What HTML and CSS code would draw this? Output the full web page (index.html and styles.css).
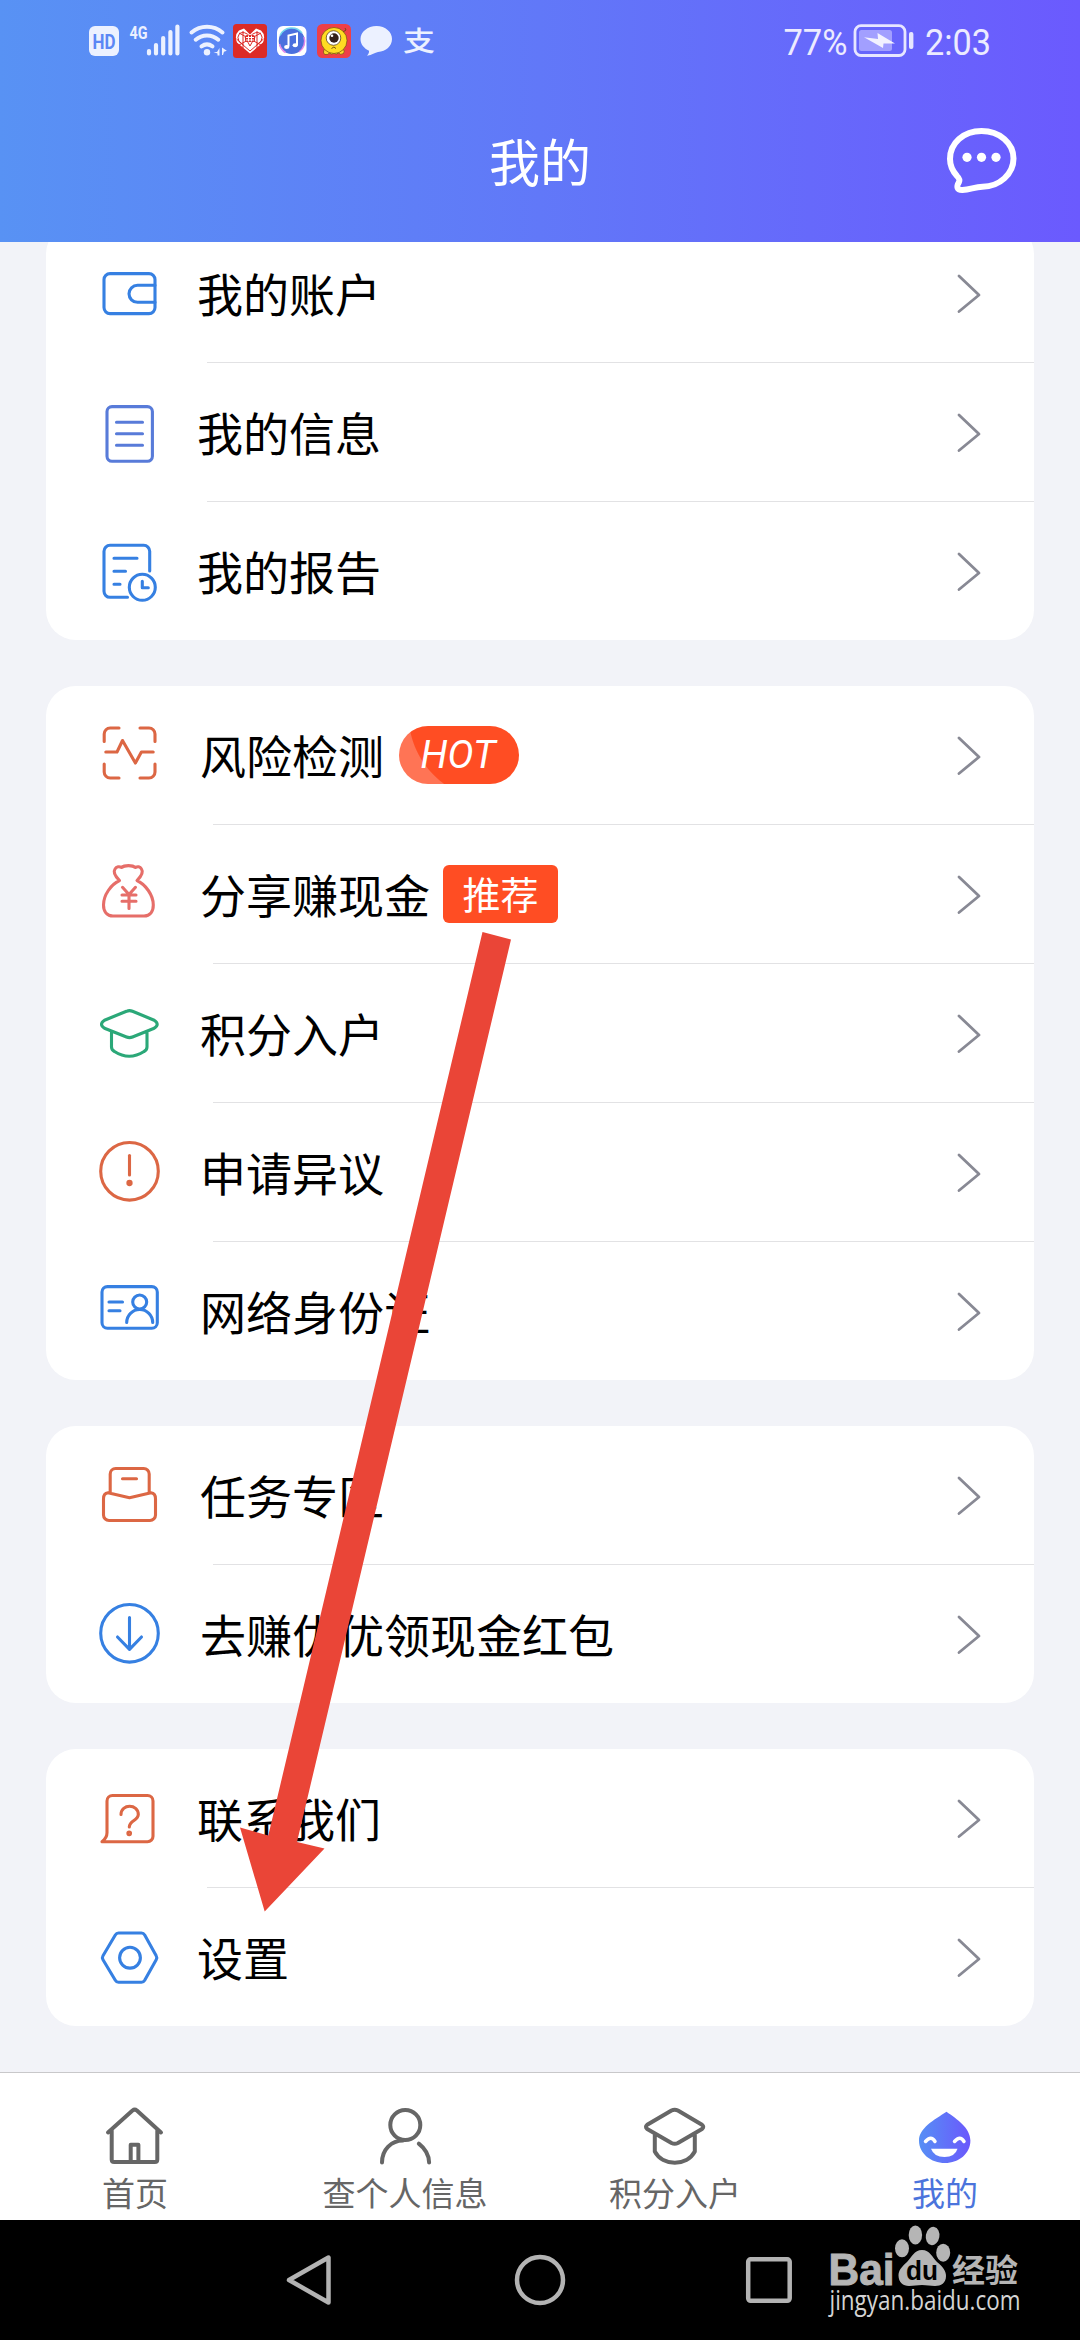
FILE: index.html
```html
<!DOCTYPE html>
<html lang="zh-CN">
<head>
<meta charset="utf-8">
<title>我的</title>
<link rel="stylesheet" href="styles.css">
</head>
<body>
<svg class="defs" aria-hidden="true">
  <symbol id="chevron" viewBox="0 0 24 40"><path d="M2 2 22 21 2 37.500" fill="none" stroke="currentColor" stroke-width="2.800" stroke-linecap="round" stroke-linejoin="round"/></symbol>
</svg>
<div class="screen">
  <header class="header">
    <div class="status">
      <svg class="status-icons" viewBox="80 18 370 46">
        <rect x="89" y="26" width="30" height="30" rx="6" fill="#ecf1ff"/>
        <text x="92.500" y="48.500" class="st-hd" textLength="23" lengthAdjust="spacingAndGlyphs">HD</text>
        <text x="129.500" y="38.700" class="st-4g" textLength="18" lengthAdjust="spacingAndGlyphs">4G</text>
        <path d="M149 51v2.500M156 45v8.500M163.200 38v15.500M170.400 32v21.500M177.400 26.500v27" class="st-line" stroke-width="4.200"/>
        <path d="M191.500 32.500a24 24 0 0 1 31 0M195.700 39.700a17 17 0 0 1 22.600 0M201.500 46.300a9.500 9.500 0 0 1 11 0" class="st-line" stroke-width="4"/>
        <circle cx="207" cy="52.300" r="3.200" fill="#ecf1ff"/>
        <path d="M213.500 52h3.500l2.500-4v7.500h-2v-2zM222 47.500l4.800 3.200-2.800 1-1 3.300h-1z" fill="#ecf1ff"/>
        <rect x="233" y="24" width="34" height="34" rx="3.500" fill="#dc2b26"/>
        <path d="M250 53.500 237 42.500Q234 35 239 30.500l5-2 6 6 6-6 5 2q5 4.500 2 12z" fill="#fff"/>
        <path d="M250 51 239 41.500Q236.500 37 239.500 33.500q5-3 10.500 3 5.500-6 10.500-3 3 3.500.5 8zM239 33l22 12M261 33l-22 12M236.500 39l7 6M263.500 39l-7 6M243 31v17M257 31v17M245 37l5 9 5-9" fill="none" stroke="#dc2b26" stroke-width="1"/>
        <rect x="245" y="35" width="10" height="7" rx="2" fill="#dc2b26"/><path d="M246 37.500h8M246 40h8M248.500 35.500v6M251.500 35.500v6" stroke="#fff" stroke-width="1"/>
        <rect x="277" y="26" width="29.500" height="30" rx="6" fill="#fff"/>
        <circle cx="291.700" cy="41" r="13" fill="#4b70de"/><path d="M280 35.500A13 13 0 0 1 302 33" stroke="#72d6ee" fill="none" stroke-width="1.500"/><path d="M279.500 44a13 13 0 0 0 6 8.500M304 37a13 13 0 0 1-5 15" stroke="#e28bea" fill="none" stroke-width="1.500"/>
        <path d="M288.500 46.500V35.500l8.500-2V45" fill="none" stroke="#fff" stroke-width="2"/><ellipse cx="286.700" cy="47" rx="2.600" ry="2" fill="#fff"/><ellipse cx="295.200" cy="45.300" rx="2.600" ry="2" fill="#fff"/>
        <rect x="317" y="24" width="34" height="34" rx="5.500" fill="#ee3f48"/>
        <path d="M325 48q-3 5 0 6.500 3 .5 4.500-1.500 2 2.500 4.500 0 2 2.500 4.500 0 2 2.500 5 .5 2-2-1-5.500z" fill="#ffd62c" stroke="#6f4a10" stroke-width=".7"/>
        <circle cx="334" cy="40.500" r="13" fill="#ffdc22" stroke="#6f4a10" stroke-width=".7"/>
        <circle cx="333.500" cy="38" r="7.300" fill="#fff" stroke="#5a4020" stroke-width=".8"/><circle cx="334" cy="38" r="4.700" fill="#33201a"/><circle cx="332" cy="35.800" r="1.300" fill="#fff"/>
        <path d="M331.500 48.500q2.500-3 4.500 0M343 32l3-2-1-2" fill="none" stroke="#754c12" stroke-width="1"/>
        <path d="M376.500 26c9 0 15.500 6 15.500 13s-6 12.500-14 13c-3 .5-6 3-11 3.800 1.500-1.500 2.300-3.600 2-5-5-2.500-8.500-6.500-8.500-11.800 0-7 7-13 16-13z" fill="#ecf1ff"/>
        <text x="403" y="51" class="st-pay" textLength="32" lengthAdjust="spacingAndGlyphs">支</text>
      </svg>
      <svg class="status-right" viewBox="780 18 220 46">
        <text x="783.500" y="54.500" class="st-num" textLength="64" lengthAdjust="spacingAndGlyphs">77%</text>
        <rect x="855" y="25.700" width="50" height="29.800" rx="6" fill="none" stroke="#e7e6ff" stroke-width="2.800"/>
        <rect x="859" y="30" width="33" height="21" rx="2.500" fill="#a29fff"/>
        <path d="M864 37.300 878 39 877.500 33 895 43.500 883.500 43.500 883 48z" fill="#f3f2ff"/>
        <rect x="909" y="32" width="4.400" height="17" rx="2" fill="#e7e6ff"/>
        <text x="925" y="54.500" class="st-num" textLength="66" lengthAdjust="spacingAndGlyphs">2:03</text>
      </svg>
    </div>
    <div class="titlebar">
      <h1 class="title">我的</h1>
      <svg class="chat" viewBox="942 124 80 74"><path d="M981.500 132c18 0 32 12 32 27.500s-14 28-31 28.300c-8 .2-12 2.800-20 3.200-5.500.2-6.500-3-3.500-8 1.200-2.500 0-4-2-6-4.500-5-7-10.500-7-17 0-16 13.500-28 31.500-28z" fill="none" stroke="#fff" stroke-width="6"/><g fill="#fff"><circle cx="967" cy="158.300" r="4.600"/><circle cx="981.500" cy="158.300" r="4.600"/><circle cx="996" cy="158.300" r="4.600"/></g></svg>
    </div>
  </header>

  <main class="content">
    <section class="card card-narrow">
      <div class="row">
        <svg class="icon blue" viewBox="0 0 64 64"><rect x="7" y="12.600" width="51" height="40" rx="6"/><path d="M58 24.300H40.500a8.500 8.500 0 0 0 0 17H58"/></svg>
        <span class="label">我的账户</span><svg class="chev"><use href="#chevron"/></svg>
      </div>
      <div class="row">
        <svg class="icon indigo" viewBox="0 0 64 64"><rect x="10" y="6.600" width="45.400" height="54.700" rx="5"/><path d="M19.500 22.300h26M19.500 33.700h26M19.500 45.300h26"/></svg>
        <span class="label">我的信息</span><svg class="chev"><use href="#chevron"/></svg>
      </div>
      <div class="row">
        <svg class="icon blue" viewBox="0 0 64 64"><path d="M52.700 32V12.300a6 6 0 0 0-6-6H13a6 6 0 0 0-6 6v40a6 6 0 0 0 6 6h17.500M17 19.300h23M17 32.300h11.500M17 45.300h6"/><circle cx="45.300" cy="48.300" r="13"/><path d="M45.300 42.200v6.500h6"/></svg>
        <span class="label">我的报告</span><svg class="chev"><use href="#chevron"/></svg>
      </div>
    </section>

    <section class="card">
      <div class="row">
        <svg class="icon orange" viewBox="0 0 64 64"><path d="M7.200 18.500V11a6 6 0 0 1 6-6H22M43 5h9a6 6 0 0 1 6 6v7.500M58 41v8a6 6 0 0 1-6 6h-9M22 55h-8.800a6 6 0 0 1-6-6v-8M8.800 29H20l5.500-11.500L38.400 40l6-11h11.800"/></svg>
        <span class="label">风险检测</span><span class="badge hot"><i>HOT</i></span><svg class="chev"><use href="#chevron"/></svg>
      </div>
      <div class="row">
        <svg class="icon coral" viewBox="0 0 64 64"><path d="M22.500 18.500c-4-4-6.500-8.500-4.500-11.500 1.500-2.500 4.500-2.800 6.500-1.500 3-2.500 11-2.500 14 0 2-1.300 4.500-1 6 1.500 2 3-.5 7.500-4.500 11.500 8.500 4 16.300 14.500 16.300 24.500 0 6.500-3.300 11-9.300 11H16C10 54 6.500 49.500 6.500 43c0-10 7.500-20.500 16-24.500zM25.500 25.300l6.500 7.200 6.500-7.200M25 33h14M25 39.300h14M32 33v13.500"/></svg>
        <span class="label">分享赚现金</span><span class="badge rec">推荐</span><svg class="chev"><use href="#chevron"/></svg>
      </div>
      <div class="row">
        <svg class="icon green" viewBox="0 0 64 64"><path d="M29.500 10.300 7.500 19.200q-6 4 0 8l22 8.800q3 1.200 6 0l21.700-8.800q6-4 0-8L35.500 10.300q-3-1.300-6 0zM14.500 30.500V46q0 3 3 4.500 14.700 9.500 29.500 0 3-1.500 3-4.500V30.500"/></svg>
        <span class="label">积分入户</span><svg class="chev"><use href="#chevron"/></svg>
      </div>
      <div class="row">
        <svg class="icon orange" viewBox="0 0 64 64"><circle cx="32.500" cy="31.300" r="28.800"/><path d="M32.500 15.500V35"/><circle cx="32.500" cy="43" r="1.600"/></svg>
        <span class="label">申请异议</span><svg class="chev"><use href="#chevron"/></svg>
      </div>
      <div class="row">
        <svg class="icon blue" viewBox="0 0 64 64"><rect x="5" y="7.600" width="55.300" height="41.700" rx="5.500"/><path d="M12 23h13.500M12 31.700h11M29.700 43.500a13 13 0 0 1 26 0"/><circle cx="42.700" cy="23" r="7"/></svg>
        <span class="label">网络身份证</span><svg class="chev"><use href="#chevron"/></svg>
      </div>
    </section>

    <section class="card">
      <div class="row">
        <svg class="icon orange" viewBox="0 0 64 64"><path d="M13.200 29V11a5.500 5.500 0 0 1 5.500-5.500h28A5.500 5.500 0 0 1 52.200 11v18M25.500 15.700h14M11 29.800q-4.500.5-4.500 6V52a5.500 5.500 0 0 0 5.500 5.500h41a5.500 5.500 0 0 0 5.500-5.500V35.800q0-5.500-4.500-6l-21.500 4.900z"/></svg>
        <span class="label">任务专区</span><svg class="chev"><use href="#chevron"/></svg>
      </div>
      <div class="row">
        <svg class="icon blue" viewBox="0 0 64 64"><circle cx="32.500" cy="31.300" r="28.800"/><path d="M32.500 15.500V47M20.500 35l12 12.300 12-12.300"/></svg>
        <span class="label">去赚优优领现金红包</span><svg class="chev"><use href="#chevron"/></svg>
      </div>
    </section>

    <section class="card card-narrow">
      <div class="row">
        <svg class="icon orange" viewBox="0 0 64 64"><path d="M5 55.700q5-4 5-9V15a5.500 5.500 0 0 1 5.500-5.500h35A5.500 5.500 0 0 1 56 15v35.200a5.500 5.500 0 0 1-5.500 5.500zM24 28.500c0-11 17.300-11 17.300 0 0 6-9 6-9 12.500"/><circle cx="32.200" cy="47.300" r="1.300"/></svg>
        <span class="label">联系我们</span><svg class="chev"><use href="#chevron"/></svg>
      </div>
      <div class="row">
        <svg class="icon blue" viewBox="0 0 64 64"><path d="M21.500 8h23q2 0 3.200 2l11.500 20.700q1.200 2 0 4L47.700 55.300q-1.200 2-3.200 2h-23q-2 0-3.200-2L6 34.700q-1.200-2 0-4L18.300 10q1.200-2 3.200-2z"/><circle cx="33" cy="32.700" r="10.400"/></svg>
        <span class="label">设置</span><svg class="chev"><use href="#chevron"/></svg>
      </div>
    </section>
  </main>

  <nav class="tabs">
    <div class="tab">
      <svg class="tab-icon" viewBox="0 0 64 64"><path d="M5 28.500 29.500 6.500q2.200-1.700 4.400 0L58 28.500M8.700 26v29.500q0 2.500 2.500 2.500h40.600q2.500 0 2.500-2.500V26M27.700 57.500V40.800h7.700v16.700"/></svg>
      <span>首页</span>
    </div>
    <div class="tab">
      <svg class="tab-icon" viewBox="0 0 64 64"><circle cx="32.300" cy="21" r="15"/><path d="M9 58.500c0-13 9.500-22 21-22M45.800 39.700q10 7.800 10.300 18.800"/></svg>
      <span>查个人信息</span>
    </div>
    <div class="tab">
      <svg class="tab-icon" viewBox="0 0 64 64"><path d="M28.500 6.500 4.200 20.800q-2.500 2 0 4.200l24.300 14q3.200 1.600 6.400 0L59 25q2.500-2.200 0-4.200L34.900 6.500q-3.200-1.600-6.400 0zM11.800 31v16.500c8 15 32 15 40 0V31"/></svg>
      <span>积分入户</span>
    </div>
    <div class="tab active">
      <svg class="tab-icon" viewBox="0 0 64 64"><defs><linearGradient id="drop" x1="0" x2="1"><stop offset="0" stop-color="#568ff5"/><stop offset="1" stop-color="#6b58fc"/></linearGradient></defs><path d="M33.500 7.700C44 15 57.400 24 57.400 36.500 57.400 49.500 46 59 32 59S6 49.500 6 36.500C6 24 21 16 33.500 7.700z" fill="url(#drop)" stroke="none"/><path d="M12.500 37.500q5.500-6.500 9.500 0M41.500 37.500q5.500-6.500 9.500 0" stroke="#fff" stroke-width="3.500"/><path d="M18 44.700h26.500q-2.500 8.300-13 8.300T18 44.700z" fill="#fff" stroke="none"/></svg>
      <span>我的</span>
    </div>
  </nav>

  <div class="sysnav">
    <svg class="sys" viewBox="0 0 56 56"><path d="M45.500 5.500v45L6 28z"/></svg>
    <svg class="sys" viewBox="0 0 56 56"><circle cx="28" cy="28" r="23"/></svg>
    <svg class="sys" viewBox="0 0 56 56"><rect x="7.200" y="7.300" width="41.500" height="41.500" rx="2.500"/></svg>
  </div>

  <svg class="pointer" viewBox="236 928 92 988" width="92" height="988" overflow="visible"><path d="M482.500 932 511 939.500 297 1842l27.500 6.500-59.800 63L240 1827.500l28.300 8z" fill="#ea4537"/></svg>

  <svg class="watermark" viewBox="820 2220 210 110">
    <g fill="#b5b5b5">
      <text x="828.500" y="2284.500" class="wm-bai" textLength="66" lengthAdjust="spacingAndGlyphs">Bai</text>
      <ellipse cx="902" cy="2248.300" rx="7" ry="9"/><ellipse cx="915.400" cy="2235" rx="6.700" ry="9.500"/><ellipse cx="932.600" cy="2236" rx="6.800" ry="9.200" transform="rotate(10 932.600 2236)"/><ellipse cx="943.200" cy="2252.700" rx="7" ry="9"/>
      <path d="M922 2250c8 0 10 7 15 12 6 5 9 9 9 14 0 7-5 10-11 10-5 0-8-1-13-1s-8 1-13 1c-6 0-10.500-4-10.500-10.500 0-5 3-8.500 8.500-13.500 5-5 7-12 15-12z"/>
      <text x="952" y="2281.500" class="wm-cn" textLength="66" lengthAdjust="spacingAndGlyphs">经验</text>
      <text x="829.500" y="2310" class="wm-url" textLength="191" lengthAdjust="spacingAndGlyphs">jingyan.baidu.com</text>
    </g>
    <text x="906" y="2279.500" class="wm-du" textLength="32" lengthAdjust="spacingAndGlyphs">du</text>
  </svg>
</div>
</body>
</html>
```
FILE: styles.css
```css
* { box-sizing: border-box; }
body { margin: 0; font-family: "Noto Sans CJK SC", sans-serif; }
.defs { position: absolute; width: 0; height: 0; }
.screen {
  position: relative;
  width: 1080px;
  height: 2340px;
  display: flex;
  flex-direction: column;
  overflow: hidden;
  background: #f2f3f8;
}

.header {
  flex: none;
  height: 242px;
  background: linear-gradient(90deg, #5892f4, #6178f8 50%, #6b5afe);
  color: #fff;
  z-index: 1;
}
.status {
  display: flex;
  justify-content: space-between;
  padding: 18px 80px 0;
  height: 80px;
}
.status-icons { width: 370px; height: 46px; overflow: visible; }
.status-right { width: 220px; height: 46px; overflow: visible; }
.st-hd { font: 700 20px Roboto, sans-serif; fill: #5b87f5; }
.st-4g { font: 700 19px Roboto, sans-serif; fill: #ecf1ff; }
.st-line { fill: none; stroke: #ecf1ff; stroke-linecap: round; }
.st-pay { font: 500 27px "Noto Sans CJK SC", sans-serif; fill: #ecf1ff; }
.st-num { font: 400 36px Roboto, sans-serif; fill: #ecebff; }
.titlebar {
  display: grid;
  grid-template-columns: 1fr auto 1fr;
  align-items: center;
  height: 160px;
  padding-right: 58px;
  padding-left: 58px;
}
.title { grid-column: 2; margin: 0; font-size: 51px; font-weight: 400; line-height: 160px; }
.chat { justify-self: end; width: 80px; height: 74px; }

.content {
  flex: 1;
  min-height: 0;
  margin-top: -18px;
  padding: 0 46px;
  display: flex;
  flex-direction: column;
  gap: 46px;
}
.card { --inset: 167px; --gap: 39px; background: #fff; border-radius: 30px; overflow: hidden; }
.card-narrow { --inset: 161px; --gap: 36px; }
.row {
  display: flex;
  align-items: center;
  height: 139px;
  padding: 0 53px 1px 51px;
  background: linear-gradient(#e2e2e4, #e2e2e4) var(--inset) 100% / 100% 1px no-repeat;
}
.row:last-child { height: 138px; padding-bottom: 0; background: none; }
.icon {
  flex: none;
  width: 64px;
  height: 64px;
  margin-right: var(--gap);
  fill: none;
  stroke: currentColor;
  stroke-width: 3.100;
  stroke-linecap: round;
  stroke-linejoin: round;
}
.blue { color: #3680e2; }
.indigo { color: #587bd9; }
.orange { color: #dc6744; }
.coral { color: #e66e69; }
.green { color: #2ba878; }
.label { padding-bottom: 3px; font-size: 46px; line-height: 66px; color: #000; white-space: nowrap; }
.chev { flex: none; width: 24px; height: 40px; margin-left: auto; margin-top: 1px; color: #888994; }
.badge {
  display: flex;
  align-items: center;
  justify-content: center;
  height: 58px;
  color: #fff;
  background: #ff4d23;
}
.hot {
  width: 120px;
  margin-left: 15px;
  padding-right: 2px;
  border-radius: 29px;
  font: 400 39px Roboto, sans-serif;
  background: radial-gradient(circle at 96px -12px, #ff4d23 86px, #ff7455 87px);
}
.rec { width: 115px; margin-left: 13px; padding-bottom: 3px; border-radius: 6px; font-size: 38px; line-height: 55px; }

.tabs {
  flex: none;
  display: grid;
  grid-template-columns: repeat(4, 1fr);
  height: 148px;
  border-top: 1px solid #c8c8ca;
  background: #fff;
}
.tab {
  display: flex;
  flex-direction: column;
  align-items: center;
  padding-top: 31px;
  font-size: 33px;
  line-height: 48px;
  color: #666;
}
.active { color: #4b74dc; }
.tab-icon {
  width: 64px;
  height: 64px;
  fill: none;
  stroke: currentColor;
  stroke-width: 4;
  stroke-linecap: round;
  stroke-linejoin: round;
}

.sysnav {
  flex: none;
  display: flex;
  justify-content: center;
  align-items: center;
  gap: 173px;
  height: 120px;
  background: #000;
}
.sys { width: 56px; height: 56px; fill: none; stroke: #b3b3b3; stroke-width: 4.500; stroke-linejoin: round; }

.pointer { position: absolute; left: 236px; top: 928px; z-index: 2; }
.watermark { position: absolute; left: 820px; top: 2220px; width: 210px; height: 110px; overflow: visible; }
.wm-bai { font: 700 45px "Liberation Sans", sans-serif; stroke: #b5b5b5; stroke-width: 1; }
.wm-cn { font: 700 32px "Noto Sans CJK SC", sans-serif; }
.wm-url { font: 400 27px "Open Sans", sans-serif; fill: #d4d4d4; }
.wm-du { font: 700 27px "Liberation Sans", sans-serif; fill: #000; }
```
